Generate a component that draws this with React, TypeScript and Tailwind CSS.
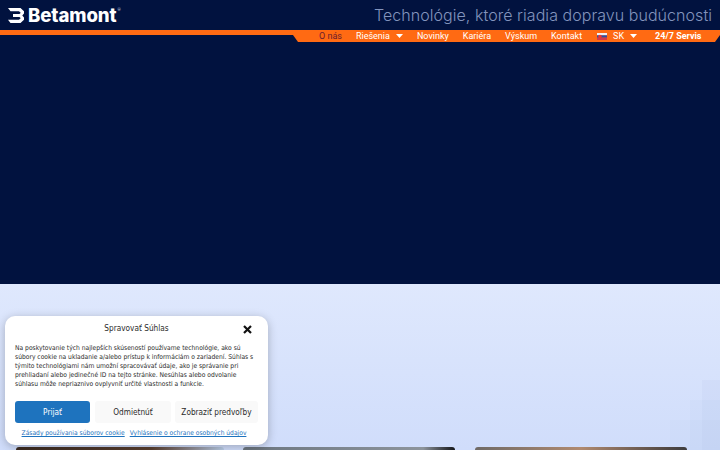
export default function App() {
  return (
    <div className="w-[720px] h-[450px] overflow-hidden relative bg-[#01123f] flex flex-col font-['Roboto',sans-serif]">
      <header className="h-[30px] shrink-0 flex items-center justify-between pl-[8px] pr-[8px]">
        <div className="flex items-center gap-[4px] text-white">
          <svg width="16" height="15" viewBox="0 0 16 15" fill="#fff"><path d="M0 0h12.500L16 3.200v2.400L14.300 7.500 16 9.400v2.400L12.500 15H2.500L0 11.800h10.800L12.400 10.800V9.800L11.400 9H5V6H11.400L12.400 5.200V4.200L10.800 3.200H2.500z"/></svg>
          <span className="text-[18.600px] leading-none font-extrabold font-['Inter',sans-serif] tracking-[-0.1px]">Betamont</span>
          <span className="text-[4px] leading-none self-start mt-[2px] -ml-[3px] text-[#cfd6e6]">®</span>
        </div>
        <div className="text-[16px] leading-none tracking-[0.05px] text-[#8394bd] font-['Inter',sans-serif] font-light">Technológie, ktoré riadia dopravu budúcnosti</div>
      </header>
      <div className="h-[5px] bg-[#ff6a13] shrink-0" />
      <nav className="self-end -mt-[5px] w-[428px] h-[12px] bg-[#ff6a13] flex items-center gap-[14px] pl-[27px] [clip-path:polygon(0_0,100%_0,100%_5px,423px_12px,6px_12px,1px_5px)] text-white text-[9px] leading-none shrink-0">
        <span className="text-[#6b1c2e]">O nás</span>
        <span className="flex items-center gap-[6px]">Riešenia<Caret /></span>
        <span>Novinky</span>
        <span>Kariéra</span>
        <span>Výskum</span>
        <span>Kontakt</span>
        <span className="flex items-center gap-[6px] ml-[1px]"><Flag />SK<Caret /></span>
        <span className="font-bold ml-[4px]">24/7 Servis</span>
      </nav>
      <div className="h-[242px] shrink-0" />
      <main className="flex-1 relative bg-gradient-to-b from-[#dfe8fd] to-[#d0ddfb] flex items-end px-[16px]">
        <svg className="absolute right-0 bottom-0" width="90" height="80" viewBox="0 0 90 80">
          <rect x="40" y="50" width="50" height="30" fill="#8a9bc4" opacity="0.03" />
          <rect x="60" y="30" width="30" height="50" fill="#8a9bc4" opacity="0.04" />
          <rect x="72" y="10" width="18" height="70" fill="#8a9bc4" opacity="0.06" />
        </svg>
        <div className="w-[208px] h-[3px] rounded-t-[3px] bg-gradient-to-r from-[#3b2b22] via-[#5a3f30] via-65% to-[#b9cde8]" />
        <div className="ml-[19px] w-[212px] h-[3px] rounded-t-[3px] bg-gradient-to-r from-[#6c7680] via-[#8d949c] via-85% to-[#17181c]" />
        <div className="ml-[20px] w-[212px] h-[3px] rounded-t-[3px] bg-gradient-to-r from-[#6f6a66] via-[#b08a70] to-[#3d3a3a]" />
      </main>
      <div className="absolute left-[5px] top-[316px] w-[263px] h-[129px] bg-white rounded-[10px] shadow-[0_2px_10px_rgba(0,0,0,0.25)] px-[10px] pt-[5px] font-['DejaVu_Sans_Condensed','DejaVu_Sans',sans-serif] font-stretch-condensed text-[#2b2b2b]">
        <div className="relative text-center text-[8.200px] leading-[14px]">Spravovať Súhlas
          <svg className="absolute right-[6px] top-[4px]" width="9" height="9" viewBox="0 0 9 9"><path d="M1 1l7 7M8 1l-7 7" stroke="#111" strokeWidth="2.200" /></svg>
        </div>
        <p className="mt-[8.500px] text-[6.680px] leading-[9.100px]">Na poskytovanie tých najlepších skúseností používame technológie, ako sú súbory cookie na ukladanie a/alebo prístup k informáciám o zariadení. Súhlas s týmito technológiami nám umožní spracovávať údaje, ako je správanie pri prehliadaní alebo jedinečné ID na tejto stránke. Nesúhlas alebo odvolanie súhlasu môže nepriaznivo ovplyvniť určité vlastnosti a funkcie.</p>
        <div className="mt-[12px] flex gap-[5px] text-[8.200px]">
          <div className="w-[75px] h-[22px] rounded-[3px] bg-[#1e73be] text-white flex items-center justify-center">Prijať</div>
          <div className="w-[76px] h-[22px] rounded-[3px] bg-[#f9f9f9] flex items-center justify-center">Odmietnúť</div>
          <div className="w-[83px] -ml-[1px] h-[22px] rounded-[3px] bg-[#f9f9f9] flex items-center justify-center">Zobraziť predvoľby</div>
        </div>
        <div className="mt-[5px] pr-[5px] flex justify-center gap-[5px] text-[6.650px] leading-[10px] text-[#1e73be] underline"><span>Zásady používania súborov cookie</span><span>Vyhlásenie o ochrane osobných údajov</span></div>
      </div>
    </div>
  );
}
function Caret() { return <svg width="7" height="4" viewBox="0 0 7 4"><path d="M0 0h7L3.500 4z" fill="#fff" /></svg>; }
function Flag() { return <svg width="10" height="7" viewBox="0 0 10 7"><rect width="10" height="2.400" fill="#f1f1f4"/><rect y="2.300" width="10" height="2.400" fill="#2f4fa2"/><rect y="4.600" width="10" height="2.400" fill="#d43a4a"/><circle cx="3" cy="3.500" r="1.700" fill="#e33"/></svg>; }
